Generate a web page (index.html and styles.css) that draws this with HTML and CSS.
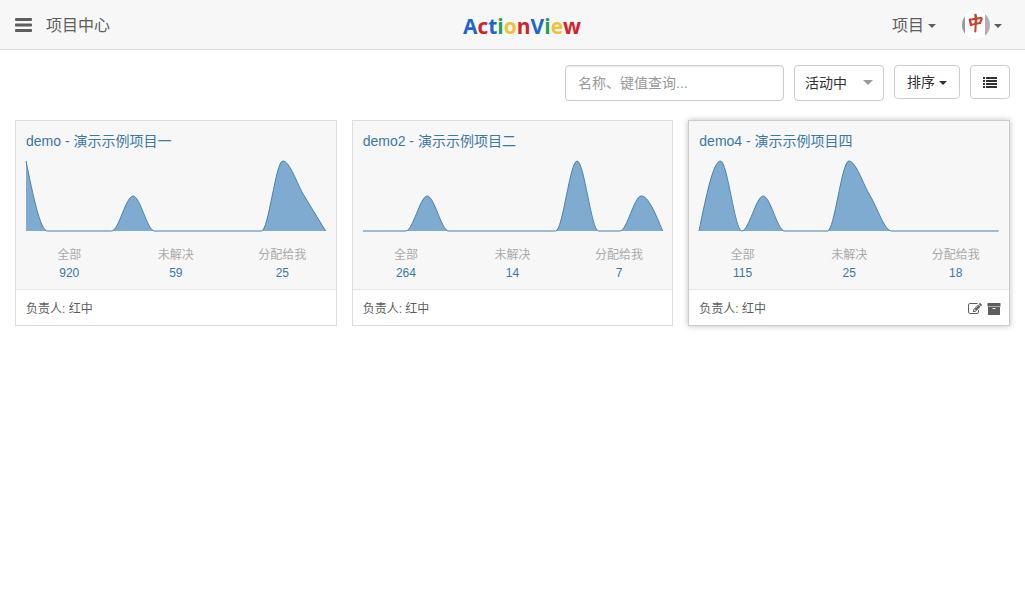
FILE: index.html
```html
<!DOCTYPE html>
<html lang="zh-CN">
<head>
<meta charset="utf-8">
<meta name="viewport" content="width=device-width, initial-scale=1">
<title>ActionView</title>
<link rel="stylesheet" href="styles.css">
</head>
<body>
<header class="topbar">
  <div class="topbar-left">
    <button class="plain-btn" type="button" aria-label="菜单">
      <svg class="icon-menu" viewBox="0 0 17 14"><path d="M1 0H16q1 0 1 1v1q0 1-1 1H1q-1 0-1-1V1q0-1 1-1zM1 5.500H16q1 0 1 1v1q0 1-1 1H1q-1 0-1-1v-1q0-1 1-1zM1 11H16q1 0 1 1v1q0 1-1 1H1q-1 0-1-1v-1q0-1 1-1z"/></svg>
    </button>
    <span class="nav-text">项目中心</span>
  </div>
  <a class="logo" href="#"><span class="blue">A</span><span class="red">c</span><span class="blue">t</span><span class="green">i</span><span class="yellow">o</span><span class="red">n</span><span class="blue">V</span><span class="green">i</span><span class="yellow">e</span><span class="red">w</span></a>
  <nav class="topbar-right">
    <button class="plain-btn nav-btn" type="button"><span class="nav-text">项目</span><span class="caret"></span></button>
    <button class="plain-btn nav-btn" type="button" aria-label="用户">
      <svg class="avatar" viewBox="0 0 28 28">
        <defs><clipPath id="round"><circle cx="14" cy="14" r="14"/></clipPath></defs>
        <g clip-path="url(#round)">
          <rect width="28" height="28" fill="#fff"/>
          <rect width="3" height="28" fill="#999"/>
          <rect x="23" width="5" height="28" fill="#b0b0b0"/>
        </g>
        <g fill="none" stroke="#c8402f" stroke-linecap="round" stroke-linejoin="round">
          <path stroke-width="2.400" d="M7.800 8.800 9 14"/>
          <path stroke-width="2" d="M8 8.800 18.500 7Q20.500 6.800 19.500 8.500L18 12"/>
          <path stroke-width="1.800" d="M9 13.800 18 12"/>
          <path stroke-width="2.600" d="M13.500 4Q14.500 8 13.800 12"/>
          <path stroke-width="2" d="M13.800 12 13.300 20.500"/>
        </g>
      </svg>
      <span class="caret"></span>
    </button>
  </nav>
</header>

<main class="content">
  <form class="toolbar">
    <input class="control search" type="text" aria-label="名称、键值查询" placeholder="名称、键值查询...">
    <div class="select-wrap">
      <select class="control status" aria-label="状态"><option>活动中</option></select>
    </div>
    <button class="control btn" type="button">排序<span class="caret"></span></button>
    <button class="control btn" type="button" aria-label="列表">
      <svg class="icon-list" viewBox="0 0 14 11"><path d="M0 0h2v2H0zM3 0h11v2H3zM0 3h2v2H0zM3 3h11v2H3zM0 6h2v2H0zM3 6h11v2H3zM0 9h2v2H0zM3 9h11v2H3z"/></svg>
    </button>
  </form>

  <section class="cards">
    <article class="card">
      <div class="card-main">
        <a class="card-title" href="#">demo - 演示示例项目一</a>
        <svg class="chart" viewBox="0 0 300 70" preserveAspectRatio="none">
          <path class="area" d="M0 0C7.140 35 14.290 70 21.430 70H85.710C92.860 70 100 35 107.140 35S121.430 70 128.570 70H235.710C242.860 70 250 0 257.140 0C264.290 0 271.430 23.330 278.570 35L300 70H0z"/>
          <path class="line" d="M0 0C7.140 35 14.290 70 21.430 70H85.710C92.860 70 100 35 107.140 35S121.430 70 128.570 70H235.710C242.860 70 250 0 257.140 0C264.290 0 271.430 23.330 278.570 35L300 70"/>
        </svg>
        <dl class="stats">
          <div><dt>全部</dt><dd><a href="#">920</a></dd></div>
          <div><dt>未解决</dt><dd><a href="#">59</a></dd></div>
          <div><dt>分配给我</dt><dd><a href="#">25</a></dd></div>
        </dl>
      </div>
      <footer class="card-foot"><span>负责人: 红中</span></footer>
    </article>

    <article class="card">
      <div class="card-main">
        <a class="card-title" href="#">demo2 - 演示示例项目二</a>
        <svg class="chart" viewBox="0 0 300 70" preserveAspectRatio="none">
          <path class="area" d="M0 70H42.860C50 70 57.140 35 64.290 35S78.570 70 85.710 70H192.860C200 70 207.140 0 214.290 0S228.570 70 235.710 70H257.140C264.290 70 271.430 35 278.570 35S292.860 52.500 300 70z"/>
          <path class="line" d="M0 70H42.860C50 70 57.140 35 64.290 35S78.570 70 85.710 70H192.860C200 70 207.140 0 214.290 0S228.570 70 235.710 70H257.140C264.290 70 271.430 35 278.570 35S292.860 52.500 300 70"/>
        </svg>
        <dl class="stats">
          <div><dt>全部</dt><dd><a href="#">264</a></dd></div>
          <div><dt>未解决</dt><dd><a href="#">14</a></dd></div>
          <div><dt>分配给我</dt><dd><a href="#">7</a></dd></div>
        </dl>
      </div>
      <footer class="card-foot"><span>负责人: 红中</span></footer>
    </article>

    <article class="card card-active">
      <div class="card-main">
        <a class="card-title" href="#">demo4 - 演示示例项目四</a>
        <svg class="chart" viewBox="0 0 300 70" preserveAspectRatio="none">
          <path class="area" d="M0 70C7.140 35 14.290 0 21.430 0S35.710 70 42.860 70S57.140 35 64.290 35S78.570 70 85.710 70H128.570C135.710 70 142.860 0 150 0C157.140 0 164.290 23.330 171.430 35C178.570 46.670 185.710 70 192.860 70H300z"/>
          <path class="line" d="M0 70C7.140 35 14.290 0 21.430 0S35.710 70 42.860 70S57.140 35 64.290 35S78.570 70 85.710 70H128.570C135.710 70 142.860 0 150 0C157.140 0 164.290 23.330 171.430 35C178.570 46.670 185.710 70 192.860 70H300"/>
        </svg>
        <dl class="stats">
          <div><dt>全部</dt><dd><a href="#">115</a></dd></div>
          <div><dt>未解决</dt><dd><a href="#">25</a></dd></div>
          <div><dt>分配给我</dt><dd><a href="#">18</a></dd></div>
        </dl>
      </div>
      <footer class="card-foot">
        <span>负责人: 红中</span>
        <span class="actions">
          <button class="plain-btn" type="button" aria-label="编辑">
            <svg class="icon-action" viewBox="0 0 1792 1792"><path d="M888 1184l116-116-152-152-116 116v56h96v96h56zm440-720q-16-16-33 1l-350 350q-17 17-1 33t33-1l350-350q17-17 1-33zm80 594v190q0 119-84.500 203.500t-203.500 84.500h-832q-119 0-203.500-84.500t-84.500-203.500v-832q0-119 84.500-203.500t203.500-84.500h832q63 0 117 25 15 7 18 23 3 17-9 29l-49 49q-14 14-32 8-23-6-45-6h-832q-66 0-113 47t-47 113v832q0 66 47 113t113 47h832q66 0 113-47t47-113v-126q0-13 9-22l64-64q15-15 35-7t20 29zm-96-738l288 288-672 672h-288v-288zm444 132l-92 92-288-288 92-92q28-28 68-28t68 28l152 152q28 28 28 68t-28 68z"/></svg>
          </button>
          <button class="plain-btn" type="button" aria-label="归档">
            <svg class="icon-action" viewBox="0 0 14 14"><path d="M1 1h12q.5 0 .5.500V4.500H.5V1.500Q.5 1 1 1z"/><path fill-rule="evenodd" d="M1 5h12v7.500q0 .5-.5.500h-11Q1 13 1 12.500zM5.500 6v1h3V6z"/></svg>
          </button>
        </span>
      </footer>
    </article>
  </section>
</main>
</body>
</html>
```

FILE: styles.css
```css
* { box-sizing: border-box; }

body {
  margin: 0;
  background: #fff;
  color: #333;
  font: 14px/20px "Liberation Sans", "Noto Sans CJK SC", sans-serif;
}

a { color: #3b78a8; text-decoration: none; }
button, input, select { font: inherit; color: inherit; }
svg { display: block; fill: currentColor; }

.topbar {
  display: grid;
  grid-template-columns: 1fr auto 1fr;
  align-items: center;
  height: 50px;
  padding: 0 23px 0 15px;
  background: #f7f7f7;
  border-bottom: 1px solid #ddd;
  color: #5e5e5e;
  font-size: 16px;
}

.topbar-left { display: flex; align-items: center; gap: 14px; }
.topbar-right { display: flex; align-items: center; justify-content: flex-end; gap: 26px; }

.plain-btn { padding: 0; border: 0; background: none; cursor: pointer; }
.nav-btn { display: flex; align-items: center; gap: 4px; }
.nav-text { padding-top: 2px; }

.icon-menu { width: 17px; height: 14px; }
.avatar { width: 28px; height: 28px; }

.caret {
  display: inline-block;
  margin-top: 2px;
  border: 4px solid transparent;
  border-top-color: currentColor;
  border-bottom: 0;
}

.logo {
  font: bold 21px/28px "Open Sans", sans-serif;
  padding: 3px 0 0 27px;
}
.blue { color: #1d66d0; }
.red { color: #d0232a; }
.green { color: #1fa055; }
.yellow { color: #efc23a; }

.content { padding: 15px; }

.toolbar {
  display: flex;
  justify-content: flex-end;
  align-items: flex-start;
  gap: 10px;
  margin-bottom: 19px;
}

.control {
  height: 34px;
  border: 1px solid #ccc;
  border-radius: 4px;
  background: #fff;
}

.search {
  width: 219px;
  height: 36px;
  padding: 0 12px;
  box-shadow: inset 0 1px 1px rgba(0, 0, 0, .08);
}
.search::placeholder { color: #999; opacity: 1; }

.select-wrap { position: relative; }
.select-wrap::after {
  content: "";
  position: absolute;
  top: 15px;
  right: 11px;
  border: 5px solid transparent;
  border-top-color: #999;
  border-bottom: 0;
  pointer-events: none;
}
.status {
  width: 90px;
  height: 36px;
  padding: 0 10px;
  appearance: none;
}

.btn {
  display: flex;
  align-items: center;
  gap: 4px;
  padding: 0 12px;
}
.icon-list { width: 14px; height: 11px; }

.cards {
  display: grid;
  grid-template-columns: repeat(auto-fill, minmax(300px, 1fr));
  gap: 15px;
}

.card { border: 1px solid #ddd; }
.card-active { border-color: #ccc; box-shadow: 0 0 6px rgba(0, 0, 0, .25); }

.card-main {
  padding: 10px 0 7px;
  background: #f7f7f7;
  border-bottom: 1px solid #e7e7e7;
}
.card-title { display: block; padding: 0 10px; }

.chart {
  width: calc(100% - 20px);
  height: 70px;
  margin: 10px 10px 15px;
  overflow: visible;
}
.area { fill: #80abd1; }
.line { fill: none; stroke: #4682a9; vector-effect: non-scaling-stroke; }

.stats {
  display: grid;
  grid-template-columns: repeat(3, 1fr);
  margin: 0;
  text-align: center;
  font-size: 12px;
  line-height: 18px;
}
.stats dt { color: #aaa; }
.stats dd { margin: 0; }

.card-foot {
  display: flex;
  align-items: center;
  justify-content: space-between;
  height: 35px;
  padding: 2px 8px 0 10px;
  color: #5e5e5e;
  font-size: 12px;
}
.actions { display: flex; gap: 5px; }
.icon-action { width: 14px; height: 14px; }
```
